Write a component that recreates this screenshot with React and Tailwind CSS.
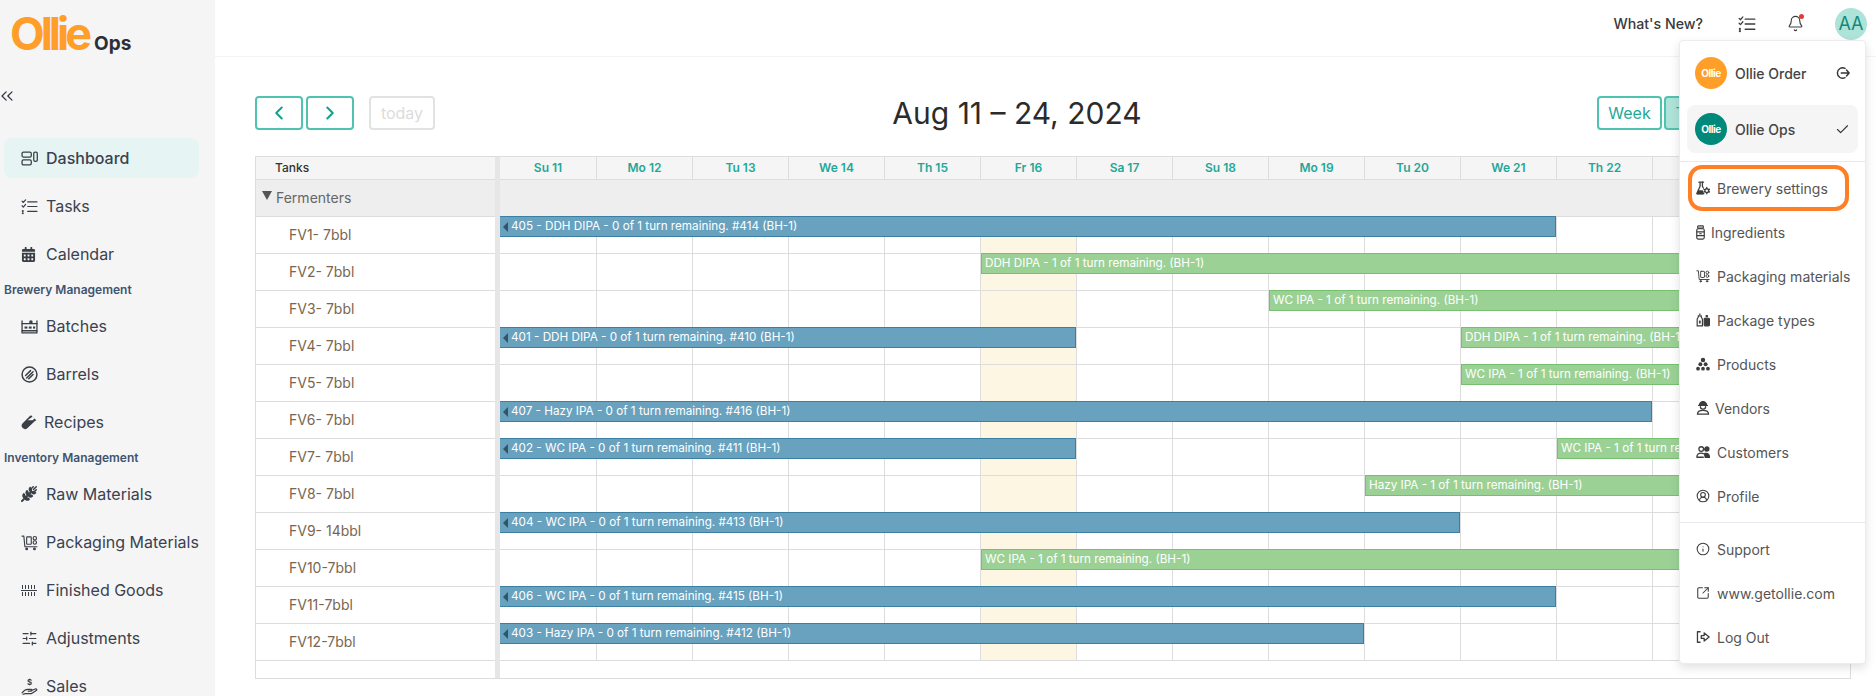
import React from "react";
import { ChevronsLeft, ChevronLeft, ChevronRight, Bell, SlidersHorizontal, Check, CircleUserRound, Info, SquareArrowOutUpRight } from "lucide-react";
import { FaCalendarAlt } from "react-icons/fa";
import { FaWheatAwn } from "react-icons/fa6";

const S = ({ size = 16, children, vb = "0 0 24 24", sw = 1.8 }) => (
  <svg width={size} height={size} viewBox={vb} fill="none" stroke="currentColor" strokeWidth={sw} strokeLinecap="round" strokeLinejoin="round">{children}</svg>
);

const TaskIcon = ({ size = 17 }) => (
  <S size={size} sw={1.7}>
    <path d="M9.5 5.5h13M9.5 12h13M9.5 19h13" />
    <path d="M1.5 4.5l1.8 1.8L6.5 2.5M1.5 11l1.8 1.8L6.5 9" />
    <circle cx="2.5" cy="18.5" r=".6" fill="currentColor" />
    <circle cx="2.5" cy="21.5" r=".6" fill="currentColor" />
  </S>
);
const DashIcon = () => (
  <S size={17}>
    <rect x="1.5" y="3" width="13" height="7" rx="2" />
    <rect x="1.5" y="14" width="13" height="7" rx="2" />
    <rect x="18" y="3" width="5" height="13" rx="2" />
  </S>
);
const BatchIcon = () => (
  <S size={17}>
    <path d="M1.5 4v17h21V4" />
    <path d="M1.5 8h21M1.5 18h21" />
    <rect x="5" y="12" width="4" height="3" fill="currentColor" stroke="none" />
    <rect x="11" y="12" width="4" height="3" fill="currentColor" stroke="none" />
    <circle cx="14" cy="5.5" r="2.5" fill="currentColor" stroke="none" />
    <rect x="17" y="12" width="3" height="3" fill="currentColor" stroke="none" />
  </S>
);
const BarrelIcon = () => (
  <S size={17} sw={2.1}>
    <circle cx="12" cy="12" r="10.5" />
    <path d="M6.5 13.5 13.5 6.5M8 17l9-9M11 18l6-6" />
  </S>
);
const TubeIcon = () => (
  <svg width="16" height="16" viewBox="0 0 24 24" fill="currentColor">
    <path d="M15 2 23 9.5 20.5 11 9.5 21.5a5.2 5.2 0 0 1-7.3-7.3L13 3.5Z" />
    <path d="M10 9.2h7.5l3-3-3-2.5Z" fill="#f5f5f5" />
  </svg>
);
const PackIcon = ({ size = 17 }) => (
  <S size={size} sw={1.6}>
    <path d="M1.5 3H4l1.5 15h17" />
    <rect x="8" y="4" width="6.5" height="10.5" rx=".8" />
    <circle cx="19.5" cy="6" r="2.4" />
    <circle cx="19.5" cy="12" r="2.4" />
    <circle cx="8" cy="21" r="1.2" fill="currentColor" />
    <circle cx="19" cy="21" r="1.2" fill="currentColor" />
  </S>
);
const BarsIcon = () => (
  <svg width="16" height="16" viewBox="0 0 16 16" fill="none" stroke="currentColor" strokeWidth="1">
    <path d="M0 8.5h16" />
    <path d="M1.5 3v4M4.5 3v4M7.5 3v4M10.5 3v4M13.5 3v4" />
    <path d="M1.5 10v4M4.5 10v4M7.5 10v4M10.5 10v4M13.5 10v4" />
  </svg>
);
const SalesIcon = () => (
  <svg width="17" height="17" viewBox="0 0 24 24" fill="none" stroke="currentColor" strokeWidth="1.7" strokeLinecap="round" strokeLinejoin="round">
    <text x="12" y="10" fontSize="11" fontWeight="700" textAnchor="middle" fill="currentColor" stroke="none">$</text>
    <path d="M1.5 21c2.5-3.5 5-5 8-5h4.5c2 0 2 2.5 0 2.5H10M14 18l6-2.5c2-.8 3 1 1.5 2L15 22H6l-3 1" />
  </svg>
);
const FlaskGear = () => (
  <svg width="14" height="14" viewBox="0 0 24 24" fill="none" stroke="currentColor" strokeWidth="2.2" strokeLinecap="round" strokeLinejoin="round">
    <path d="M5 2h8M7 2v7L1.5 21.5h12" />
    <path d="M11 2v7l1.5 3" />
    <path d="M4 17h7l1 5H2Z" fill="currentColor" />
    <circle cx="18.5" cy="16.5" r="3.2" />
    <path d="M18.5 11v1.5M18.5 20.5V22M13.5 14l1.2.8M22.3 18.2l1.2.8M13.5 19l1.2-.8M22.3 14.8l1.2-.8" />
  </svg>
);
const JarIcon = () => (
  <svg width="9" height="15" viewBox="0 0 14 24" fill="none" stroke="currentColor" strokeWidth="1.9" strokeLinejoin="round">
    <rect x="2.5" y="1.5" width="9" height="3.5" rx="1" />
    <rect x="1" y="6" width="12" height="16.5" rx="2.5" />
    <path d="M1 11h12M1 17h12M5 14h4" />
  </svg>
);
const BottlesIcon = () => (
  <svg width="14" height="14" viewBox="0 0 24 24" fill="none" stroke="currentColor" strokeWidth="2">
    <path d="M2 11c0-2 2-2.5 2-4.5V5h5v1.5c0 2 2 2.5 2 4.5v11H2Z" />
    <path d="M5 2h3" />
    <rect x="14" y="9" width="9" height="13" rx="1.5" fill="currentColor" />
    <rect x="16.5" y="3.5" width="4" height="4" fill="currentColor" stroke="none" />
    <rect x="5" y="13" width="3" height="5" fill="currentColor" stroke="none" />
  </svg>
);
const PyramidIcon = () => (
  <svg width="14" height="14" viewBox="0 0 24 24" fill="currentColor">
    <circle cx="12" cy="5" r="3.8" />
    <circle cx="7.5" cy="12.5" r="3.4" />
    <circle cx="16.5" cy="12.5" r="3.4" />
    <circle cx="3.5" cy="20" r="3.2" />
    <circle cx="12" cy="20" r="3.2" />
    <circle cx="20.5" cy="20" r="3.2" />
  </svg>
);
const WorkerIcon = () => (
  <svg width="14" height="14" viewBox="0 0 24 24" fill="none" stroke="currentColor" strokeWidth="2.2" strokeLinecap="round">
    <path d="M6 7a6 6 0 0 1 12 0Z" fill="currentColor" />
    <path d="M7.5 9.5a4.5 4.5 0 0 0 9 0" />
    <path d="M4.5 7.5h15" />
    <path d="M2.5 22.5c0-5 3-6.5 9.5-6.5s9.5 1.5 9.5 6.5Z" />
  </svg>
);
const UsersIcon = () => (
  <svg width="14" height="14" viewBox="0 0 24 24" fill="none" stroke="currentColor" strokeWidth="2.2" strokeLinecap="round">
    <circle cx="9" cy="7" r="4" />
    <path d="M1.5 21c0-5 3-7 7.5-7 1.6 0 3 .3 4 1M1.5 21h11" />
    <circle cx="18.5" cy="7" r="3.6" fill="currentColor" />
    <path d="M15 14.5c5-1 8 1 8 6.5h-7l-1-3Z" fill="currentColor" />
  </svg>
);
const LogoutIcon = () => (
  <svg width="14" height="14" viewBox="0 0 24 24" fill="none" stroke="currentColor" strokeWidth="2.2" strokeLinecap="round" strokeLinejoin="round">
    <path d="M7 3H2.5v18H7" />
    <path d="M9 9.5h5V5l8.5 7-8.5 7v-4.5H9Z" />
  </svg>
);
const SwitchIcon = () => (
  <svg width="14" height="14" viewBox="0 0 24 24" fill="none" stroke="currentColor" strokeWidth="2.4" strokeLinecap="round" strokeLinejoin="round">
    <path d="M15.5 4a9 9 0 1 0 0 16" />
    <path d="M9 12h13.5M18 7l4.5 5-4.5 5" />
  </svg>
);

const NavItem = ({ icon, label, active, textClass = "ml-[5px]" }) => (
  <div className={`h-10 mb-2 w-[195px] ml-1 pl-[17px] flex items-center rounded-lg whitespace-nowrap text-[16px] text-[#3a4250] ${active ? "bg-[#e6f5f4] font-medium" : ""}`}>
    <span className="w-5 flex justify-start text-[#3a3f46]">{icon}</span>
    <span className={textClass}>{label}</span>
  </div>
);
const NavLabel = ({ children }) => (
  <div className="h-4 mb-2 pl-1 text-[12px] leading-4 font-semibold text-[#3f5470]">{children}</div>
);

const Sidebar = () => (
  <aside className="w-[215px] shrink-0 bg-[#f5f5f5] h-[696px] overflow-hidden">
    <div className="h-[84px] pl-[10px] pt-[6px] flex items-start">
      <span className="text-[45px] leading-[56px] font-bold tracking-[-4px] text-[#ff9f2a]">Ollie</span>
      <span className="ml-[6px] mt-[26px] text-[19px] leading-6 font-bold text-[#2d2f36]">Ops</span>
    </div>
    <div className="h-[54px] pt-[2px] -ml-[3px] text-[#2f3540]"><ChevronsLeft size={20} strokeWidth={1.5} /></div>
    <NavItem active icon={<DashIcon />} label="Dashboard" />
    <NavItem icon={<TaskIcon />} label="Tasks" />
    <NavItem icon={<FaCalendarAlt size={15} />} label="Calendar" />
    <NavLabel>Brewery Management</NavLabel>
    <NavItem icon={<BatchIcon />} label="Batches" />
    <NavItem icon={<BarrelIcon />} label="Barrels" />
    <NavItem icon={<TubeIcon />} label="Recipes" textClass="ml-[3px]" />
    <NavLabel>Inventory Management</NavLabel>
    <NavItem icon={<FaWheatAwn size={16} />} label="Raw Materials" />
    <NavItem icon={<PackIcon />} label="Packaging Materials" />
    <NavItem icon={<BarsIcon />} label="Finished Goods" />
    <NavItem icon={<SlidersHorizontal size={17} strokeWidth={1.7} />} label="Adjustments" />
    <NavItem icon={<SalesIcon />} label="Sales" />
  </aside>
);

const Topbar = () => (
  <header className="h-[57px] border-b border-[#f3f3f3] flex items-center justify-end pr-[9px] pb-[9px]">
    <span className="text-[14.2px] font-medium text-[#3a3a3a]">What's New?</span>
    <span className="ml-[35px] text-[#3c3c3c]"><TaskIcon size={18} /></span>
    <span className="ml-[31px] relative text-[#3c3c3c]">
      <Bell size={17} strokeWidth={1.6} />
      <span className="absolute top-[-1px] right-[0px] w-[5px] h-[5px] rounded-full bg-[#e53935]" />
    </span>
    <span className="ml-[31px] w-8 h-8 rounded-full bg-[#aee3d9] text-[#12897b] text-[18px] flex items-center justify-center">AA</span>
  </header>
);

const navBtn = "h-[34px] border-2 rounded flex items-center justify-center";

const Toolbar = () => (
  <div className="h-[34px] mb-[26px] flex items-center justify-between">
    <div className="flex items-center">
      <button className={`${navBtn} w-[48px] border-[#4fc3b0] text-[#12a08f]`}><ChevronLeft size={22} strokeWidth={2.2} /></button>
      <button className={`${navBtn} w-[48px] ml-[3px] border-[#4fc3b0] text-[#12a08f]`}><ChevronRight size={22} strokeWidth={2.2} /></button>
      <button className={`${navBtn} w-[66px] ml-[15px] border-[#e2e2e2] text-[#dcdcdc] text-[16px]`}>today</button>
    </div>
    <h1 className="ml-[2px] text-[30px] font-normal text-[#2b2b2b] leading-none">Aug 11 – 24, 2024</h1>
    <div className="flex items-center text-[16px] text-[#1fa898]">
      <button className={`${navBtn} w-[65px] border-[#4fc3b0]`}>Week</button>
      <button className={`${navBtn} w-[110px] ml-[2px] border-[#4fc3b0] bg-[#aee3d9]`}>Two Weeks</button>
      <button className={`${navBtn} w-[79px] ml-[-2px] border-[#4fc3b0]`}>Month</button>
    </div>
  </div>
);

const days = ["Su 11", "Mo 12", "Tu 13", "We 14", "Th 15", "Fr 16", "Sa 17", "Su 18", "Mo 19", "Tu 20", "We 21", "Th 22", "Fr 23", "Sa 24"];
const rows = [
  { name: "FV1- 7bbl", bars: [["b", 0, 11, "405 - DDH DIPA - 0 of 1 turn remaining. #414 (BH-1)"]] },
  { name: "FV2- 7bbl", bars: [["g", 5, 14, "DDH DIPA - 1 of 1 turn remaining. (BH-1)"]] },
  { name: "FV3- 7bbl", bars: [["g", 8, 14, "WC IPA - 1 of 1 turn remaining. (BH-1)"]] },
  { name: "FV4- 7bbl", bars: [["b", 0, 6, "401 - DDH DIPA - 0 of 1 turn remaining. #410 (BH-1)"], ["g", 10, 14, "DDH DIPA - 1 of 1 turn remaining. (BH-1)"]] },
  { name: "FV5- 7bbl", bars: [["g", 10, 14, "WC IPA - 1 of 1 turn remaining. (BH-1)"]] },
  { name: "FV6- 7bbl", bars: [["b", 0, 12, "407 - Hazy IPA - 0 of 1 turn remaining. #416 (BH-1)"]] },
  { name: "FV7- 7bbl", bars: [["b", 0, 6, "402 - WC IPA - 0 of 1 turn remaining. #411 (BH-1)"], ["g", 11, 14, "WC IPA - 1 of 1 turn remaining. (BH-1)"]] },
  { name: "FV8- 7bbl", bars: [["g", 9, 14, "Hazy IPA - 1 of 1 turn remaining. (BH-1)"]] },
  { name: "FV9- 14bbl", bars: [["b", 0, 10, "404 - WC IPA - 0 of 1 turn remaining. #413 (BH-1)"]] },
  { name: "FV10-7bbl", bars: [["g", 5, 14, "WC IPA - 1 of 1 turn remaining. (BH-1)"]] },
  { name: "FV11-7bbl", bars: [["b", 0, 11, "406 - WC IPA - 0 of 1 turn remaining. #415 (BH-1)"]] },
  { name: "FV12-7bbl", bars: [["b", 0, 9, "403 - Hazy IPA - 0 of 1 turn remaining. #412 (BH-1)"]] },
];
const cols = "grid grid-cols-[97px_repeat(13,96px)]";

const Bar = ({ kind, start, end, text }) => (
  <div
    style={{ gridColumn: `${start + 1} / ${end + 1}`, gridRow: 1 }}
    className={`relative z-10 self-start -mt-px mr-px h-[21px] border pt-px flex items-center text-[11.7px] text-white whitespace-nowrap overflow-hidden ${kind === "b" ? "bg-[#68a2bf] border-[#3b80a3] border-l-0 pl-[3px]" : "bg-[#9bd195] border-[#77c070] pl-[3px]"}`}
  >
    {kind === "b" && <span className="w-0 h-0 mr-[3px] border-y-[5px] border-y-transparent border-r-[5px] border-r-[#2f5568]" />}
    {text}
  </div>
);

const Calendar = () => (
  <div className="w-[1596px] h-[523px] border border-[#ddd] flex overflow-hidden">
    <div className="w-[239px] shrink-0">
      <div className="h-[22px] bg-[#f5f5f5] pl-[19px] flex items-center text-[12px] font-medium text-[#333]">Tanks</div>
      <div className="h-[37px] bg-[#eeeeee] border-t border-[#ddd] pl-[6px] pb-[2px] flex items-center text-[14px] text-[#666]">
        <span className="w-0 h-0 border-x-[5px] border-x-transparent border-t-[9px] border-t-[#555] mr-[4px] mb-[3px]" />
        Fermenters
      </div>
      {rows.map((r) => (
        <div key={r.name} className="h-[37px] border-t border-[#ddd] pl-[33px] pb-[2px] flex items-center text-[14px] text-[#7a6650]">{r.name}</div>
      ))}
      <div className="h-[18px] border-t border-[#ddd]" />
    </div>
    <div className="w-[5px] shrink-0 bg-[#e6e6e6]" />
    <div className="flex-1 min-w-0 overflow-hidden">
      <div className={`${cols} h-[22px] bg-[#f5f5f5]`}>
        {days.map((d) => (
          <div key={d} className="border-r border-[#ddd] flex items-center justify-center text-[12px] font-semibold text-[#1fa898]">{d}</div>
        ))}
      </div>
      <div className="h-[37px] bg-[#eeeeee] border-t border-[#ddd]" />
      {rows.map((r) => (
        <div key={r.name} className={`${cols} h-[37px] border-t border-[#ddd]`}>
          {days.map((d, i) => (
            <div key={d} style={{ gridColumn: i + 1, gridRow: 1 }} className={`border-r border-[#ddd] ${i === 5 ? "bg-[#fdf6e3]" : ""}`} />
          ))}
          {r.bars.map((b) => (
            <Bar key={b[3] + b[1]} kind={b[0]} start={b[1]} end={b[2]} text={b[3]} />
          ))}
        </div>
      ))}
      <div className="h-[18px] border-t border-[#ddd]" />
    </div>
  </div>
);

const Avatar = ({ bg }) => (
  <span className={`w-8 h-8 rounded-full flex items-center justify-center text-white text-[10px] font-bold tracking-[-0.5px] ${bg}`}>Ollie</span>
);

const MenuItem = ({ icon, label, textClass = "ml-[7px]", outlined }) => (
  <div className="relative h-11 pl-4 flex items-center text-[14px] text-[#555]">
    <span className="text-[#3c3c3c] flex items-center">{icon}</span>
    <span className={textClass}>{label}</span>
    {outlined && <span className="absolute left-2 right-4 top-[-1px] bottom-[-1px] border-[4px] border-[#ff7f27] rounded-[14px]" />}
  </div>
);

const Menu = () => (
  <div className="absolute top-[40px] right-[10px] w-[187px] z-20 bg-white border border-[#ececf0] rounded shadow-[0_4px_10px_rgba(60,60,80,0.15)]">
    <div className="pt-2 pb-2 border-b border-[#e8e8ee]">
      <div className="h-12 mb-2 pl-[15px] pr-[15px] flex items-center text-[14px] font-medium text-[#444]">
        <Avatar bg="bg-[#ff9f2a]" />
        <span className="ml-2 flex-1">Ollie Order</span>
        <span className="text-[#333]"><SwitchIcon /></span>
      </div>
      <div className="h-12 mx-[7px] pl-[8px] pr-[8px] flex items-center rounded-lg bg-[#f5f5f5] text-[14px] font-medium text-[#444]">
        <Avatar bg="bg-[#00897b]" />
        <span className="ml-2 flex-1">Ollie Ops</span>
        <Check size={15} strokeWidth={1.8} className="text-[#333]" />
      </div>
    </div>
    <div className="py-1 border-b border-[#e8e8ee]">
      <MenuItem outlined icon={<FlaskGear />} label="Brewery settings" />
      <MenuItem icon={<JarIcon />} label="Ingredients" textClass="ml-[6px]" />
      <MenuItem icon={<PackIcon size={14} />} label="Packaging materials" />
      <MenuItem icon={<BottlesIcon />} label="Package types" />
      <MenuItem icon={<PyramidIcon />} label="Products" />
      <MenuItem icon={<WorkerIcon />} label="Vendors" textClass="ml-[5px]" />
      <MenuItem icon={<UsersIcon />} label="Customers" />
      <MenuItem icon={<CircleUserRound size={14} strokeWidth={1.8} />} label="Profile" />
    </div>
    <div className="py-1">
      <MenuItem icon={<Info size={14} strokeWidth={1.8} />} label="Support" />
      <MenuItem icon={<SquareArrowOutUpRight size={14} strokeWidth={1.8} />} label="www.getollie.com" />
      <MenuItem icon={<LogoutIcon />} label="Log Out" />
    </div>
  </div>
);

export default function App() {
  return (
    <div className="relative w-[1876px] h-[696px] overflow-hidden bg-white flex [font-family:Inter,sans-serif]">
      <Sidebar />
      <main className="flex-1 min-w-0">
        <Topbar />
        <div className="pl-10 pr-[25px] pt-[39px]">
          <Toolbar />
          <Calendar />
        </div>
      </main>
      <Menu />
    </div>
  );
}
